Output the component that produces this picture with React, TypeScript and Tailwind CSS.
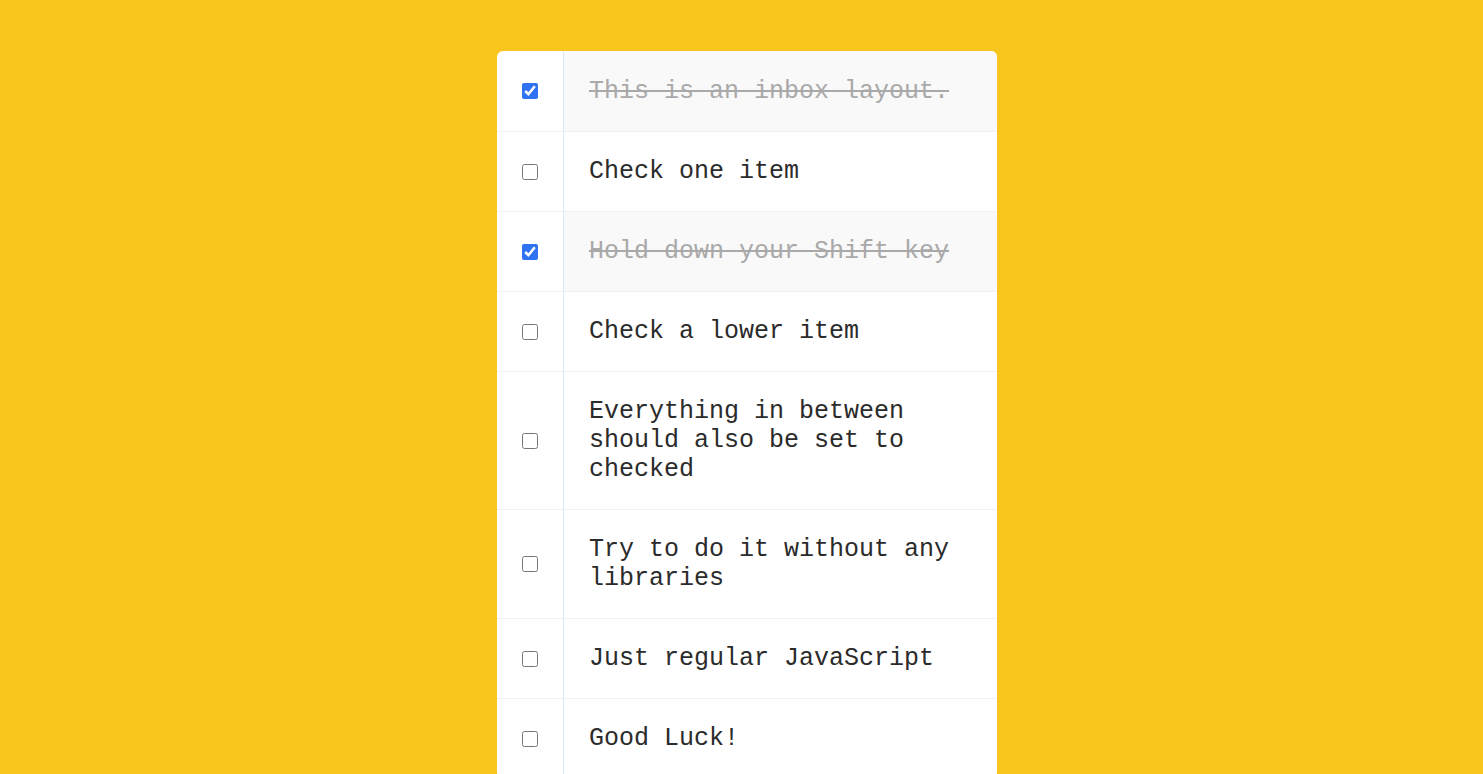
import React, { useState } from 'react';

const ITEMS = [
  'This is an inbox layout.',
  'Check one item',
  'Hold down your Shift key',
  'Check a lower item',
  'Everything in between should also be set to checked',
  'Try to do it without any libraries',
  'Just regular JavaScript',
  'Good Luck!',
];

export default function App() {
  const [checked, setChecked] = useState<boolean[]>([true, false, true, false, false, false, false, false]);

  const toggle = (i: number) => {
    setChecked((prev) => prev.map((c, idx) => (idx === i ? !c : c)));
  };

  return (
    <div className="h-screen overflow-hidden bg-[#f9c61d]">
      <div className="flex justify-center pl-[11px] pt-[51px]">
        {/* Inbox card */}
        <div className="w-[500px] bg-white rounded-[6px] overflow-hidden">
          {ITEMS.map((text, i) => (
            <div
              key={i}
              className="flex items-center border-b border-[#f1f1f1] last:border-b-0"
            >
              <input
                type="checkbox"
                checked={checked[i]}
                onChange={() => toggle(i)}
                className="m-[25px] w-4 h-4 shrink-0 accent-[#2f72f2]"
              />
              <p
                className={`flex-1 self-stretch flex items-center px-[25px] pb-[25px] border-l border-[#dde8f7] text-[25px] leading-[29px] ${
                  i === 0 ? 'pt-[26px]' : 'pt-[25px]'
                } ${checked[i] ? 'bg-[#f9f9f9] line-through text-[#a9a9a9]' : 'text-[#2b2b2b]'}`}
                style={{ fontFamily: '"Liberation Mono", "Courier New", monospace' }}
              >
                <span>{text}</span>
              </p>
            </div>
          ))}
        </div>
      </div>
    </div>
  );
}
